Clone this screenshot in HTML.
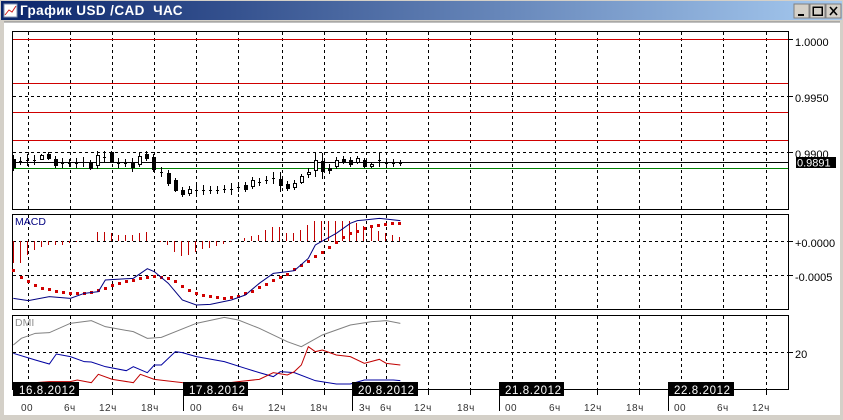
<!DOCTYPE html>
<html><head><meta charset="utf-8"><style>
html,body{margin:0;padding:0;width:843px;height:420px;overflow:hidden;background:#d4d0c8}
svg{position:absolute;left:0;top:0}
text{font-family:"Liberation Sans","DejaVu Sans",sans-serif}
</style></head><body>
<svg width="843" height="420" viewBox="0 0 843 420" xmlns="http://www.w3.org/2000/svg" shape-rendering="crispEdges">
<defs>
<linearGradient id="tb" x1="0" x2="1" y1="0" y2="0"><stop offset="0" stop-color="#0a246a"/><stop offset="1" stop-color="#a6caf0"/></linearGradient>
</defs>
<rect x="0" y="0" width="843" height="420" fill="#d4d0c8"/>
<rect x="1" y="1" width="841" height="19" fill="url(#tb)"/>
<rect x="4" y="4" width="13" height="13" fill="#fff" stroke="#8090b0"/>
<path d="M5 15 L9 10 L12 12 L16 6" stroke="#d02020" fill="none" shape-rendering="auto"/>
<text x="20" y="15" font-size="13.5" font-weight="bold" fill="#fff" letter-spacing="0.4" xml:space="preserve">График USD /CAD  ЧАС</text>
<g font-size="11" font-weight="bold">
<rect x="794" y="4" width="15" height="14" fill="#d4d0c8" stroke="#808080"/><path d="M798 15h6" stroke="#000" stroke-width="2"/>
<rect x="810" y="4" width="15" height="14" fill="#d4d0c8" stroke="#808080"/><rect x="813" y="7" width="9" height="8" fill="none" stroke="#000" stroke-width="1.5"/>
<rect x="826" y="4" width="15" height="14" fill="#d4d0c8" stroke="#808080"/><path d="M830 7l7 8M837 7l-7 8" stroke="#000" stroke-width="1.6" shape-rendering="auto"/>
</g>
<rect x="4" y="22" width="836" height="393" fill="#fff"/>
<path d="M4 22h836" stroke="#808080"/>
<g fill="none" stroke="#000">
<rect x="12.5" y="31.5" width="776" height="178"/>
<rect x="12.5" y="214.5" width="776" height="95"/>
<rect x="12.5" y="315.5" width="776" height="74"/>
</g>
<g stroke="#000" stroke-dasharray="3,3">
<path d="M28.5 32V209M70.5 32V209M112.5 32V209M154.5 32V209M196.5 32V209M238.5 32V209M282.5 32V209M324.5 32V209M366.5 32V209M386.5 32V209M428.5 32V209M470.5 32V209M512.5 32V209M555.5 32V209M597.5 32V209M639.5 32V209M681.5 32V209M723.5 32V209M766.5 32V209"/>
<path d="M28.5 215V309M70.5 215V309M112.5 215V309M154.5 215V309M196.5 215V309M238.5 215V309M282.5 215V309M324.5 215V309M366.5 215V309M386.5 215V309M428.5 215V309M470.5 215V309M512.5 215V309M555.5 215V309M597.5 215V309M639.5 215V309M681.5 215V309M723.5 215V309M766.5 215V309"/>
<path d="M28.5 316V389M70.5 316V389M112.5 316V389M154.5 316V389M196.5 316V389M238.5 316V389M282.5 316V389M324.5 316V389M366.5 316V389M386.5 316V389M428.5 316V389M470.5 316V389M512.5 316V389M555.5 316V389M597.5 316V389M639.5 316V389M681.5 316V389M723.5 316V389M766.5 316V389"/>
<path d="M13 96.5H788M13 152.5H788M13 241.5H788M13 275.5H788M13 352.5H788"/>
</g>
<path d="M788 39.5h5M788 96.5h5M788 152.5h5M788 241.5h5M788 275.5h5M788 352.5h5" stroke="#000"/>
<path d="M13 39.5H788M13 83.5H788M13 112.5H788M13 140.5H788" stroke="#d00000"/>
<path d="M13 162.5H788" stroke="#000"/>
<path d="M13 168.5H788" stroke="#008000"/>
<g font-size="11" fill="#000">
<text x="795" y="46">1.0000</text>
<text x="795" y="102">0.9950</text>
<text x="795" y="158">0.9900</text>
<text x="795" y="247">+0.0000</text>
<text x="795" y="281">-0.0005</text>
<text x="795" y="358">20</text>
</g>
<rect x="796" y="157" width="40" height="11" fill="#000"/>
<text x="797" y="166.5" font-size="11" fill="#fff">0.9891</text>
<path stroke="#000" d="M13.5 155V171M20.5 157V165M27.5 154V166M34.5 155V165M41.5 154V160M48.5 152V160M55.5 156V168M62.5 158V168M69.5 159V167M76.5 158V168M83.5 157V167M90.5 160V170M97.5 151V169M104.5 151V163M111.5 151V163M118.5 158V168M125.5 159V167M132.5 158V172M139.5 153V167M146.5 151V161M153.5 154V172M161.5 167V177M168.5 170V186M175.5 178V192M182.5 187V197M189.5 186V196M196.5 185V195M203.5 185V195M210.5 186V194M217.5 186V194M224.5 185V193M231.5 183V195M238.5 182V192M245.5 182V192M252.5 177V189M259.5 178V186M266.5 176V184M273.5 172V184M280.5 172V192M287.5 181V191M294.5 180V190M301.5 174V184M308.5 168V178M315.5 153V177M322.5 153V179M329.5 164V174M336.5 157V169M343.5 156V164M350.5 157V167M357.5 156V164M364.5 158V168M371.5 162V168M379.5 153V167M386.5 158V168M393.5 159V167M400.5 160V166"/>
<g stroke="#000" stroke-width="1">
<rect x="12.5" y="159.5" width="3" height="8" fill="#000"/>
<rect x="40.5" y="155.5" width="3" height="4" fill="#fff"/>
<rect x="47.5" y="154.5" width="3" height="4" fill="#000"/>
<rect x="54.5" y="159.5" width="3" height="6" fill="#000"/>
<rect x="89.5" y="162.5" width="3" height="6" fill="#000"/>
<rect x="96.5" y="155.5" width="3" height="10" fill="#fff"/>
<rect x="110.5" y="152.5" width="3" height="10" fill="#000"/>
<rect x="131.5" y="163.5" width="3" height="4" fill="#000"/>
<rect x="138.5" y="156.5" width="3" height="8" fill="#fff"/>
<rect x="145.5" y="154.5" width="3" height="4" fill="#000"/>
<rect x="152.5" y="157.5" width="3" height="12" fill="#000"/>
<rect x="167.5" y="173.5" width="3" height="10" fill="#000"/>
<rect x="174.5" y="180.5" width="3" height="10" fill="#000"/>
<rect x="181.5" y="190.5" width="3" height="4" fill="#000"/>
<rect x="188.5" y="189.5" width="3" height="4" fill="#fff"/>
<rect x="244.5" y="185.5" width="3" height="4" fill="#000"/>
<rect x="251.5" y="180.5" width="3" height="6" fill="#fff"/>
<rect x="279.5" y="179.5" width="3" height="6" fill="#000"/>
<rect x="286.5" y="184.5" width="3" height="4" fill="#000"/>
<rect x="293.5" y="183.5" width="3" height="4" fill="#fff"/>
<rect x="300.5" y="176.5" width="3" height="6" fill="#fff"/>
<rect x="307.5" y="172.5" width="3" height="2" fill="#fff"/>
<rect x="314.5" y="160.5" width="3" height="10" fill="#fff"/>
<rect x="321.5" y="161.5" width="3" height="10" fill="#000"/>
<rect x="328.5" y="168.5" width="3" height="2" fill="#000"/>
<rect x="335.5" y="160.5" width="3" height="6" fill="#fff"/>
<rect x="342.5" y="159.5" width="3" height="2" fill="#000"/>
<rect x="349.5" y="160.5" width="3" height="4" fill="#000"/>
<rect x="356.5" y="158.5" width="3" height="4" fill="#fff"/>
<rect x="363.5" y="160.5" width="3" height="6" fill="#000"/>
<rect x="370.5" y="164.5" width="3" height="2" fill="#fff"/>
</g>
<g stroke="#000"><path d="M19 161.5h3M26 160.5h3M33 160.5h3M61 163.5h3M68 163.5h3M75 163.5h3M82 162.5h3M103 157.5h3M117 163.5h3M124 163.5h3M160 172.5h3M195 190.5h3M202 190.5h3M209 190.5h3M216 190.5h3M223 189.5h3M230 189.5h3M237 187.5h3M258 182.5h3M265 180.5h3M272 178.5h3M378 160.5h3M385 163.5h3M392 163.5h3M399 163.5h3"/></g>
<path stroke="#c00000" d="M13.5 241V263M20.5 241V263M27.5 241V255M34.5 241V250M41.5 241V247M48.5 241V245M55.5 241V245M62.5 241V245M69.5 241V243M76.5 241V242M97.5 241V232M104.5 241V232M111.5 241V233M118.5 241V235M125.5 241V235M132.5 241V235M139.5 241V233M146.5 241V232M160.5 241V242M167.5 241V245M174.5 241V252M181.5 241V256M188.5 241V255M195.5 241V252M202.5 241V249M209.5 241V248M216.5 241V246M223.5 241V244M230.5 241V242M244.5 241V238M251.5 241V236M258.5 241V235M265.5 241V230M272.5 241V227M279.5 241V227M286.5 241V233M293.5 241V233M300.5 241V230M307.5 241V225M314.5 241V221M321.5 241V221M328.5 241V221M335.5 241V221M342.5 241V221M349.5 241V221M356.5 241V223M363.5 241V226M371.5 241V228M378.5 241V231M385.5 241V233M392.5 241V235M399.5 241V237"/>
<g fill="#d00000">
<rect x="12" y="269" width="3" height="3"/><rect x="20" y="276" width="3" height="3"/><rect x="27" y="280" width="3" height="3"/><rect x="34" y="284" width="3" height="3"/><rect x="41" y="287" width="3" height="3"/><rect x="48" y="288" width="3" height="3"/><rect x="55" y="290" width="3" height="3"/><rect x="62" y="291" width="3" height="3"/><rect x="69" y="292" width="3" height="3"/><rect x="76" y="292" width="3" height="3"/><rect x="83" y="292" width="3" height="3"/><rect x="90" y="291" width="3" height="3"/><rect x="97" y="289" width="3" height="3"/><rect x="104" y="287" width="3" height="3"/><rect x="111" y="284" width="3" height="3"/><rect x="118" y="282" width="3" height="3"/><rect x="125" y="280" width="3" height="3"/><rect x="132" y="279" width="3" height="3"/><rect x="139" y="277" width="3" height="3"/><rect x="146" y="276" width="3" height="3"/><rect x="153" y="275" width="3" height="3"/><rect x="160" y="276" width="3" height="3"/><rect x="167" y="277" width="3" height="3"/><rect x="174" y="280" width="3" height="3"/><rect x="181" y="285" width="3" height="3"/><rect x="188" y="289" width="3" height="3"/><rect x="195" y="292" width="3" height="3"/><rect x="202" y="294" width="3" height="3"/><rect x="209" y="295" width="3" height="3"/><rect x="216" y="296" width="3" height="3"/><rect x="223" y="297" width="3" height="3"/><rect x="230" y="296" width="3" height="3"/><rect x="237" y="295" width="3" height="3"/><rect x="244" y="292" width="3" height="3"/><rect x="251" y="290" width="3" height="3"/><rect x="258" y="286" width="3" height="3"/><rect x="265" y="283" width="3" height="3"/><rect x="272" y="279" width="3" height="3"/><rect x="279" y="276" width="3" height="3"/><rect x="286" y="273" width="3" height="3"/><rect x="293" y="268" width="3" height="3"/><rect x="300" y="264" width="3" height="3"/><rect x="307" y="260" width="3" height="3"/><rect x="314" y="255" width="3" height="3"/><rect x="321" y="251" width="3" height="3"/><rect x="328" y="246" width="3" height="3"/><rect x="335" y="241" width="3" height="3"/><rect x="342" y="236" width="3" height="3"/><rect x="349" y="232" width="3" height="3"/><rect x="356" y="230" width="3" height="3"/><rect x="363" y="227" width="3" height="3"/><rect x="370" y="225" width="3" height="3"/><rect x="377" y="224" width="3" height="3"/><rect x="384" y="223" width="3" height="3"/><rect x="391" y="222" width="3" height="3"/><rect x="398" y="222" width="3" height="3"/>
</g>
<g transform="translate(0,210) scale(0.33333)" fill="none" stroke-width="3" shape-rendering="auto">
<polyline stroke="#000080" points="40,265 85,272 148,260 211,265 253,250 295,245 316,210 400,205 442,176 463,185 505,220 547,270 589,285 631,283 694,270 736,255 778,220 820,190 862,185 883,182 925,145 946,105 1009,70 1051,40 1072,32 1093,30 1138,25 1201,32"/>
<polyline stroke="#808080" points="40,405 64,385 106,370 148,368 211,340 274,332 316,350 400,365 442,385 484,382 589,340 673,322 715,330 778,355 862,395 904,410 967,375 1051,345 1116,335 1159,332 1201,340"/>
<polyline stroke="#0000a0" points="40,430 106,450 148,462 169,432 211,440 253,455 274,456 316,470 379,482 400,470 442,488 463,465 484,465 526,425 547,428 589,440 673,455 736,475 778,488 820,500 841,485 883,488 946,512 1009,522 1051,522 1093,510 1180,510 1201,512"/>
<polyline stroke="#c00000" points="40,520 106,518 148,515 211,515 232,510 274,518 295,493 337,508 400,518 421,493 463,508 547,518 673,520 715,515 778,508 820,488 862,495 883,485 904,465 925,410 946,425 967,420 1009,435 1051,440 1093,460 1138,448 1159,460 1201,465"/>
</g>
<text x="15" y="225" font-size="10.5" fill="#000080">MACD</text>
<text x="15" y="326" font-size="10.5" fill="#909090">DMI</text>
<path stroke="#000" d="M28.5 389V395M70.5 389V395M112.5 389V395M154.5 389V395M196.5 389V395M238.5 389V395M282.5 389V395M324.5 389V395M366.5 389V395M386.5 389V395M428.5 389V395M470.5 389V395M512.5 389V395M555.5 389V395M597.5 389V395M639.5 389V395M681.5 389V395M723.5 389V395M766.5 389V395M183.5 382V411M352.5 382V411M499.5 382V411M668.5 382V411"/>
<g fill="#000">
<rect x="13" y="382" width="66" height="14"/><rect x="183" y="382" width="65" height="14"/><rect x="352" y="382" width="66" height="14"/><rect x="499" y="382" width="65" height="14"/><rect x="668" y="382" width="66" height="14"/>
</g>
<g font-size="11.5" fill="#fff" letter-spacing="0.6">
<text x="19" y="394">16.8.2012</text><text x="189" y="394">17.8.2012</text><text x="358" y="394">20.8.2012</text><text x="505" y="394">21.8.2012</text><text x="674" y="394">22.8.2012</text>
</g>
<g font-size="10" fill="#333" letter-spacing="0.5">
<text x="21" y="411">00</text><text x="64" y="411">6ч</text><text x="99" y="411">12ч</text><text x="141" y="411">18ч</text>
<text x="190" y="411">00</text><text x="232" y="411">6ч</text><text x="268" y="411">12ч</text><text x="310" y="411">18ч</text>
<text x="359" y="411">3ч</text><text x="380" y="411">6ч</text><text x="414" y="411">12ч</text><text x="457" y="411">18ч</text>
<text x="505" y="411">00</text><text x="549" y="411">6ч</text><text x="584" y="411">12ч</text><text x="626" y="411">18ч</text>
<text x="674" y="411">00</text><text x="717" y="411">6ч</text><text x="752" y="411">12ч</text>
</g>
</svg>
</body></html>
